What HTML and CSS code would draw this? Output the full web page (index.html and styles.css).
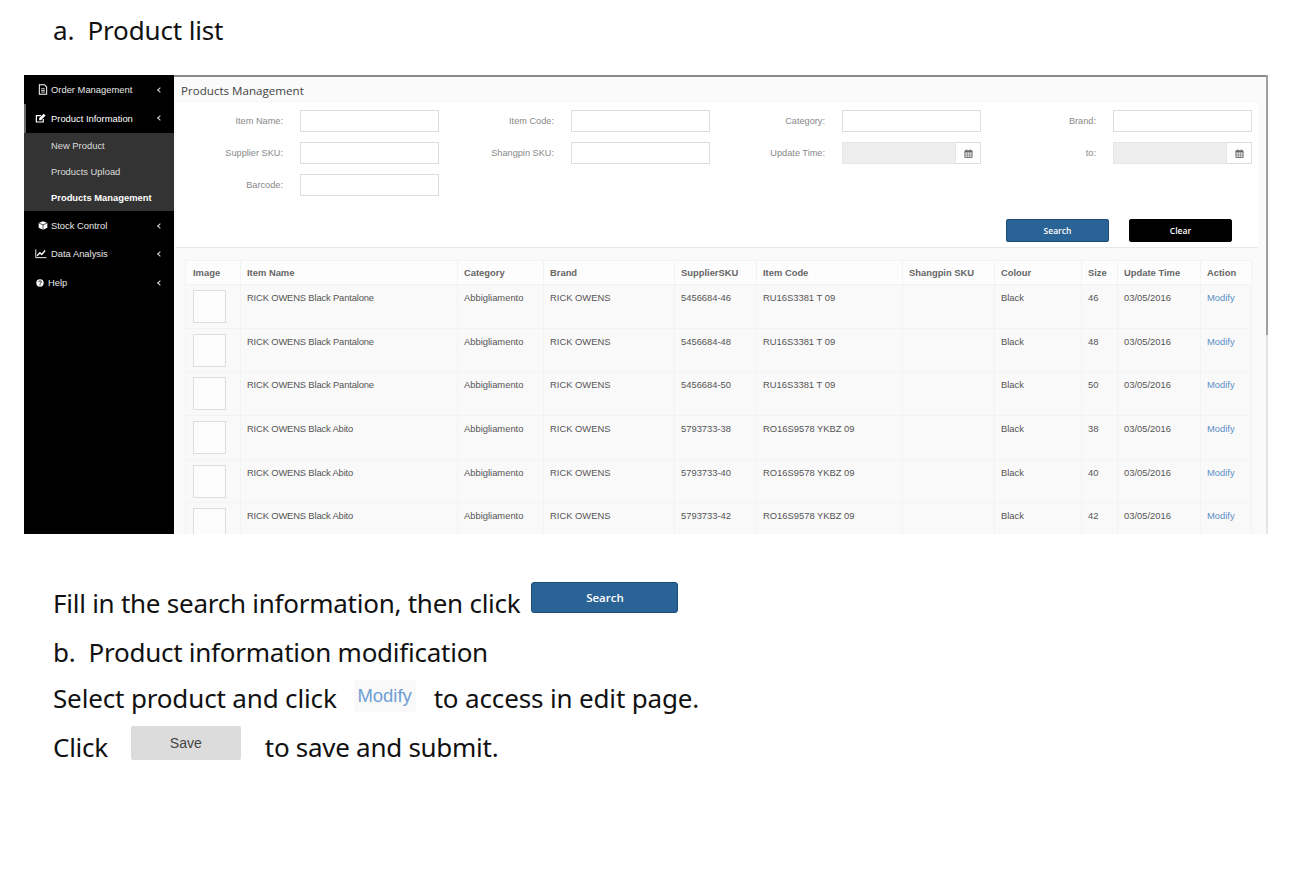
FILE: index.html
```html
<!DOCTYPE html>
<html lang="en">
<head>
  <meta charset="UTF-8">
  <title>Product list</title>
  <link rel="stylesheet" href="styles.css">
</head>
<body>
  <h2 class="doc-title">a.&nbsp; Product list</h2>

  <div class="shot">
    <aside class="sidebar">
      <a class="nav-item">
        <svg class="nav-icon" viewBox="0 0 10 12"><path d="M1 .8h5.500l2.500 2.500v7.900h-8z" fill="none" stroke="#fff" stroke-width="1.100"/><path d="M3 5.200h4M3 7h4M3 8.800h4" stroke="#fff" stroke-width=".9"/></svg>
        <span>Order Management</span><i class="chev"></i>
      </a>
      <a class="nav-item active">
        <svg class="nav-icon" viewBox="0 0 12 12"><path d="M9 6.500v3.300h-7.500v-7h5" fill="none" stroke="#fff" stroke-width="1.300"/><path d="M4.500 5.800l5-5 2 2-5 5h-2z" fill="#fff"/></svg>
        <span>Product Information</span><i class="chev"></i>
      </a>
      <div class="subnav">
        <a>New Product</a>
        <a>Products Upload</a>
        <a class="current">Products Management</a>
      </div>
      <a class="nav-item">
        <svg class="nav-icon" viewBox="0 0 12 12"><path d="M6 .8l5.200 2.200v5.800l-5.200 2.400-5.200-2.400v-5.800z" fill="#fff"/><path d="M1.200 3.200l4.800 2 4.800-2M6 5.200v6" fill="none" stroke="#000" stroke-width=".8"/></svg>
        <span>Stock Control</span><i class="chev"></i>
      </a>
      <a class="nav-item tall">
        <svg class="nav-icon wide" viewBox="0 0 13 12"><path d="M.8 1.500v9h11.700" fill="none" stroke="#fff" stroke-width="1"/><path d="M2.300 8.500l3-3.300 2 1.800 3.700-4.200" fill="none" stroke="#fff" stroke-width="1.500"/></svg>
        <span>Data Analysis</span><i class="chev"></i>
      </a>
      <a class="nav-item tall">
        <svg class="nav-icon small" viewBox="0 0 12 12"><circle cx="6" cy="6" r="5.500" fill="#fff"/><path d="M4 4.700c0-2.600 4.100-2.600 4.100-.2 0 1.500-2.100 1.400-2.100 2.800" fill="none" stroke="#000" stroke-width="1.300"/><rect x="5.200" y="8.200" width="1.600" height="1.500" fill="#000"/></svg>
        <span>Help</span><i class="chev"></i>
      </a>
    </aside>

    <main class="content">
      <div class="page-head">Products Management</div>

      <form class="filter">
        <div class="fields">
          <label class="field"><span>Item Name:</span><input type="text"></label>
          <label class="field"><span>Item Code:</span><input type="text"></label>
          <label class="field"><span>Category:</span><input type="text"></label>
          <label class="field"><span>Brand:</span><input type="text"></label>
          <label class="field"><span>Supplier SKU:</span><input type="text"></label>
          <label class="field"><span>Shangpin SKU:</span><input type="text"></label>
          <label class="field"><span>Update Time:</span>
            <span class="date"><input type="text" disabled><b class="date-btn"><svg viewBox="0 0 10 10"><path d="M1 2h8v7.500h-8z" fill="none" stroke="#666" stroke-width="1"/><path d="M1 2h8v2h-8zM2.500 .5h1v2h-1zM6.500 .5h1v2h-1z" fill="#666"/><path d="M1 5.700h8M1 7.500h8M3.700 4v5.500M6.300 4v5.500" stroke="#666" stroke-width=".6"/></svg></b></span>
          </label>
          <label class="field"><span>to:</span>
            <span class="date"><input type="text" disabled><b class="date-btn"><svg viewBox="0 0 10 10"><path d="M1 2h8v7.500h-8z" fill="none" stroke="#666" stroke-width="1"/><path d="M1 2h8v2h-8zM2.500 .5h1v2h-1zM6.500 .5h1v2h-1z" fill="#666"/><path d="M1 5.700h8M1 7.500h8M3.700 4v5.500M6.300 4v5.500" stroke="#666" stroke-width=".6"/></svg></b></span>
          </label>
          <label class="field"><span>Barcode:</span><input type="text"></label>
        </div>
        <div class="form-actions">
          <button type="button" class="btn btn-blue">Search</button>
          <button type="button" class="btn btn-black">Clear</button>
        </div>
      </form>

      <div class="table-wrap">
        <table class="products">
          <colgroup>
            <col class="c-image"><col class="c-name"><col class="c-cat"><col class="c-brand"><col class="c-sup"><col class="c-code"><col class="c-spin"><col class="c-colour"><col class="c-size"><col class="c-time"><col class="c-action">
          </colgroup>
          <thead>
            <tr><th>Image</th><th>Item Name</th><th>Category</th><th>Brand</th><th>SupplierSKU</th><th>Item Code</th><th>Shangpin SKU</th><th>Colour</th><th>Size</th><th>Update Time</th><th>Action</th></tr>
          </thead>
          <tbody>
            <tr><td><div class="thumb"></div></td><td>RICK OWENS Black Pantalone</td><td>Abbigliamento</td><td>RICK OWENS</td><td>5456684-46</td><td>RU16S3381 T 09</td><td></td><td>Black</td><td>46</td><td>03/05/2016</td><td><a class="link">Modify</a></td></tr>
            <tr><td><div class="thumb"></div></td><td>RICK OWENS Black Pantalone</td><td>Abbigliamento</td><td>RICK OWENS</td><td>5456684-48</td><td>RU16S3381 T 09</td><td></td><td>Black</td><td>48</td><td>03/05/2016</td><td><a class="link">Modify</a></td></tr>
            <tr><td><div class="thumb"></div></td><td>RICK OWENS Black Pantalone</td><td>Abbigliamento</td><td>RICK OWENS</td><td>5456684-50</td><td>RU16S3381 T 09</td><td></td><td>Black</td><td>50</td><td>03/05/2016</td><td><a class="link">Modify</a></td></tr>
            <tr><td><div class="thumb"></div></td><td>RICK OWENS Black Abito</td><td>Abbigliamento</td><td>RICK OWENS</td><td>5793733-38</td><td>RO16S9578 YKBZ 09</td><td></td><td>Black</td><td>38</td><td>03/05/2016</td><td><a class="link">Modify</a></td></tr>
            <tr><td><div class="thumb"></div></td><td>RICK OWENS Black Abito</td><td>Abbigliamento</td><td>RICK OWENS</td><td>5793733-40</td><td>RO16S9578 YKBZ 09</td><td></td><td>Black</td><td>40</td><td>03/05/2016</td><td><a class="link">Modify</a></td></tr>
            <tr><td><div class="thumb"></div></td><td>RICK OWENS Black Abito</td><td>Abbigliamento</td><td>RICK OWENS</td><td>5793733-42</td><td>RO16S9578 YKBZ 09</td><td></td><td>Black</td><td>42</td><td>03/05/2016</td><td><a class="link">Modify</a></td></tr>
          </tbody>
        </table>
      </div>
    </main>

    <div class="scrollbar"><div class="scroll-thumb"></div></div>
  </div>

  <section class="steps">
    <div class="step">Fill in the search information, then click <span class="sample sample-search">Search</span></div>
    <div class="step step-b">b.&nbsp; Product information modification</div>
    <div class="step step-select">Select product and click <span class="sample sample-modify">Modify</span> to access in edit page.</div>
    <div class="step step-click">Click <span class="sample sample-save">Save</span> to save and submit.</div>
  </section>
</body>
</html>
```

FILE: styles.css
```css
/* Document text */
body {
  margin: 0;
  background-color: #fff;
  color: #111;
  font-family: "Noto Sans", "Open Sans", sans-serif;
}
.doc-title {
  margin: 0;
  height: 75px;
  padding: 10px 0 0 53px;
  box-sizing: border-box;
  font-size: 26px;
  font-weight: 400;
  line-height: 40px;
  letter-spacing: -.15px;
}
.steps {
  padding: 47px 0 0 53px;
  font-size: 26px;
  letter-spacing: -.25px;
}
.step {
  display: flex;
  align-items: center;
  height: 44px;
}
.step-b { margin-top: 5px; }
.step-select { margin-top: 2px; letter-spacing: -.15px; }
.step-click { margin-top: 5px; letter-spacing: -.28px; }
.sample {
  display: flex;
  align-items: center;
  justify-content: center;
  box-sizing: border-box;
  letter-spacing: 0;
}
.sample-search {
  width: 147px;
  height: 31px;
  margin: 0 0 11px 11px;
  background-color: #2a6496;
  border: 1px solid #1d4c74;
  border-radius: 3px;
  color: #fff;
  font-family: "Open Sans", sans-serif;
  font-size: 11.500px;
  font-weight: 600;
}
.sample-modify {
  width: 62px;
  height: 32px;
  margin: 0 18px 4px 17px;
  background-color: #f9f9f9;
  color: #6f9fd4;
  font-family: "Liberation Sans", sans-serif;
  font-size: 18.500px;
}
.sample-save {
  width: 110px;
  height: 34px;
  margin: 0 24px 8px 23px;
  background-color: #dcdcdc;
  border-radius: 2px;
  color: #444;
  font-family: "Liberation Sans", sans-serif;
  font-size: 14px;
}

/* Embedded screenshot */
.shot {
  display: flex;
  width: 1244px;
  height: 459px;
  margin-left: 24px;
  overflow: hidden;
  font-family: "Liberation Sans", Arial, sans-serif;
  font-size: 9.400px;
}
.sidebar {
  flex: none;
  width: 150px;
  background-color: #000;
  padding-top: 1px;
  box-sizing: border-box;
}
.nav-item {
  display: flex;
  align-items: center;
  height: 28px;
  padding: 0 12px 1px 14px;
  box-sizing: border-box;
  color: #e8e8e8;
}
.nav-item.active {
  border-left: 2px solid #666;
  padding-left: 9px;
  color: #fff;
  height: 29px;
}
.nav-item.tall { height: 29px; padding-left: 11px; padding-bottom: 2px; }
.nav-icon {
  flex: none;
  width: 10px;
  height: 11px;
  margin-right: 3px;
}
.active .nav-icon { width: 11px; margin-right: 5px; }
.nav-icon.wide { width: 12px; margin-right: 4px; }
.nav-icon.small { width: 8px; height: 8px; margin-left: 1px; margin-right: 4px; }
.nav-item span { flex: 1; }
.chev {
  width: 3px;
  height: 3px;
  border-left: 1.300px solid #ddd;
  border-bottom: 1.300px solid #ddd;
  transform: rotate(45deg);
}
.subnav {
  background-color: #333;
  height: 78px;
  margin-bottom: 1px;
}
.subnav a {
  display: flex;
  align-items: center;
  height: 26px;
  padding: 0 0 1px 27px;
  box-sizing: border-box;
  color: #ddd;
}
.subnav a.current {
  color: #fff;
  font-weight: 700;
}

.content {
  flex: 1;
  min-width: 0;
  border-top: 2px solid #8a8a8a;
  background-color: #fafafa;
  box-sizing: border-box;
}
.page-head {
  height: 26px;
  padding-left: 7px;
  font-family: "Open Sans", sans-serif;
  font-size: 11.600px;
  line-height: 27px;
  color: #444;
}
.filter {
  width: 1082px;
  height: 145px;
  margin-left: 2px;
  background-color: #fff;
  border-bottom: 1px solid #e8e8e8;
  box-sizing: border-box;
}
.fields {
  display: grid;
  grid-template-columns: 263px repeat(3, 271px);
  grid-auto-rows: 22px;
  row-gap: 10px;
  padding-top: 7px;
}
.field {
  display: flex;
  align-items: center;
  justify-content: flex-end;
  gap: 17px;
  color: #888;
  font-size: 9.200px;
}
.field > span:first-child { padding-bottom: 1px; }
.field input {
  width: 139px;
  height: 22px;
  padding: 0;
  border: 1px solid #ddd;
  box-sizing: border-box;
  background-color: #fff;
}
.date {
  display: flex;
  width: 139px;
  height: 22px;
}
.date input {
  flex: 1;
  width: auto;
  min-width: 0;
  background-color: #eee;
  border-color: #e6e6e6;
}
.date-btn {
  display: flex;
  align-items: center;
  justify-content: center;
  width: 25px;
  border: 1px solid #ddd;
  border-left: none;
  box-sizing: border-box;
}
.date-btn svg { width: 9px; height: 9px; }
.form-actions {
  display: flex;
  gap: 20px;
  margin-top: 23px;
  padding-left: 830px;
}
.btn {
  width: 103px;
  height: 23px;
  padding: 0;
  border-radius: 2px;
  color: #fff;
  font-family: "Open Sans", sans-serif;
  font-size: 8.500px;
  font-weight: 600;
}
.btn-blue {
  background-color: #2a6496;
  border: 1px solid #1d4c74;
}
.btn-black {
  background-color: #000;
  border: 1px solid #000;
}

.table-wrap {
  padding: 12px 0 0 11px;
}
.products {
  width: 1066px;
  table-layout: fixed;
  border-collapse: collapse;
  color: #555;
}
.c-image { width: 55px; }
.c-name { width: 217px; }
.c-cat { width: 86px; }
.c-brand { width: 131px; }
.c-sup { width: 82px; }
.c-code { width: 146px; }
.c-spin { width: 92px; }
.c-colour { width: 87px; }
.c-size { width: 36px; }
.c-time { width: 83px; }
.c-action { width: 51px; }
.products th,
.products td {
  padding: 0 0 0 6px;
  border: 1px solid #f3f3f3;
  text-align: left;
  vertical-align: top;
  overflow: hidden;
  white-space: nowrap;
}
.products th:first-child,
.products td:first-child { padding-left: 7px; }
.products th {
  height: 24px;
  box-sizing: border-box;
  background-color: #fdfdfd;
  font-weight: 700;
  color: #666;
  vertical-align: middle;
}
.products td {
  height: 43.700px;
  padding-top: 7px;
  box-sizing: border-box;
  background-color: #f9f9f9;
  line-height: 11px;
}
.products td:first-child { padding-top: 5px; }
.products td:nth-child(2) { letter-spacing: -.15px; }
.thumb {
  width: 33px;
  height: 33px;
  border: 1px solid #ddd;
  background-color: #fcfcfc;
  box-sizing: border-box;
}
.link { color: #5b8fc7; }

.scrollbar {
  flex: none;
  width: 2px;
  background-color: #e4e4e4;
}
.scroll-thumb {
  height: 260px;
  background-color: #a0a0a0;
}
```
